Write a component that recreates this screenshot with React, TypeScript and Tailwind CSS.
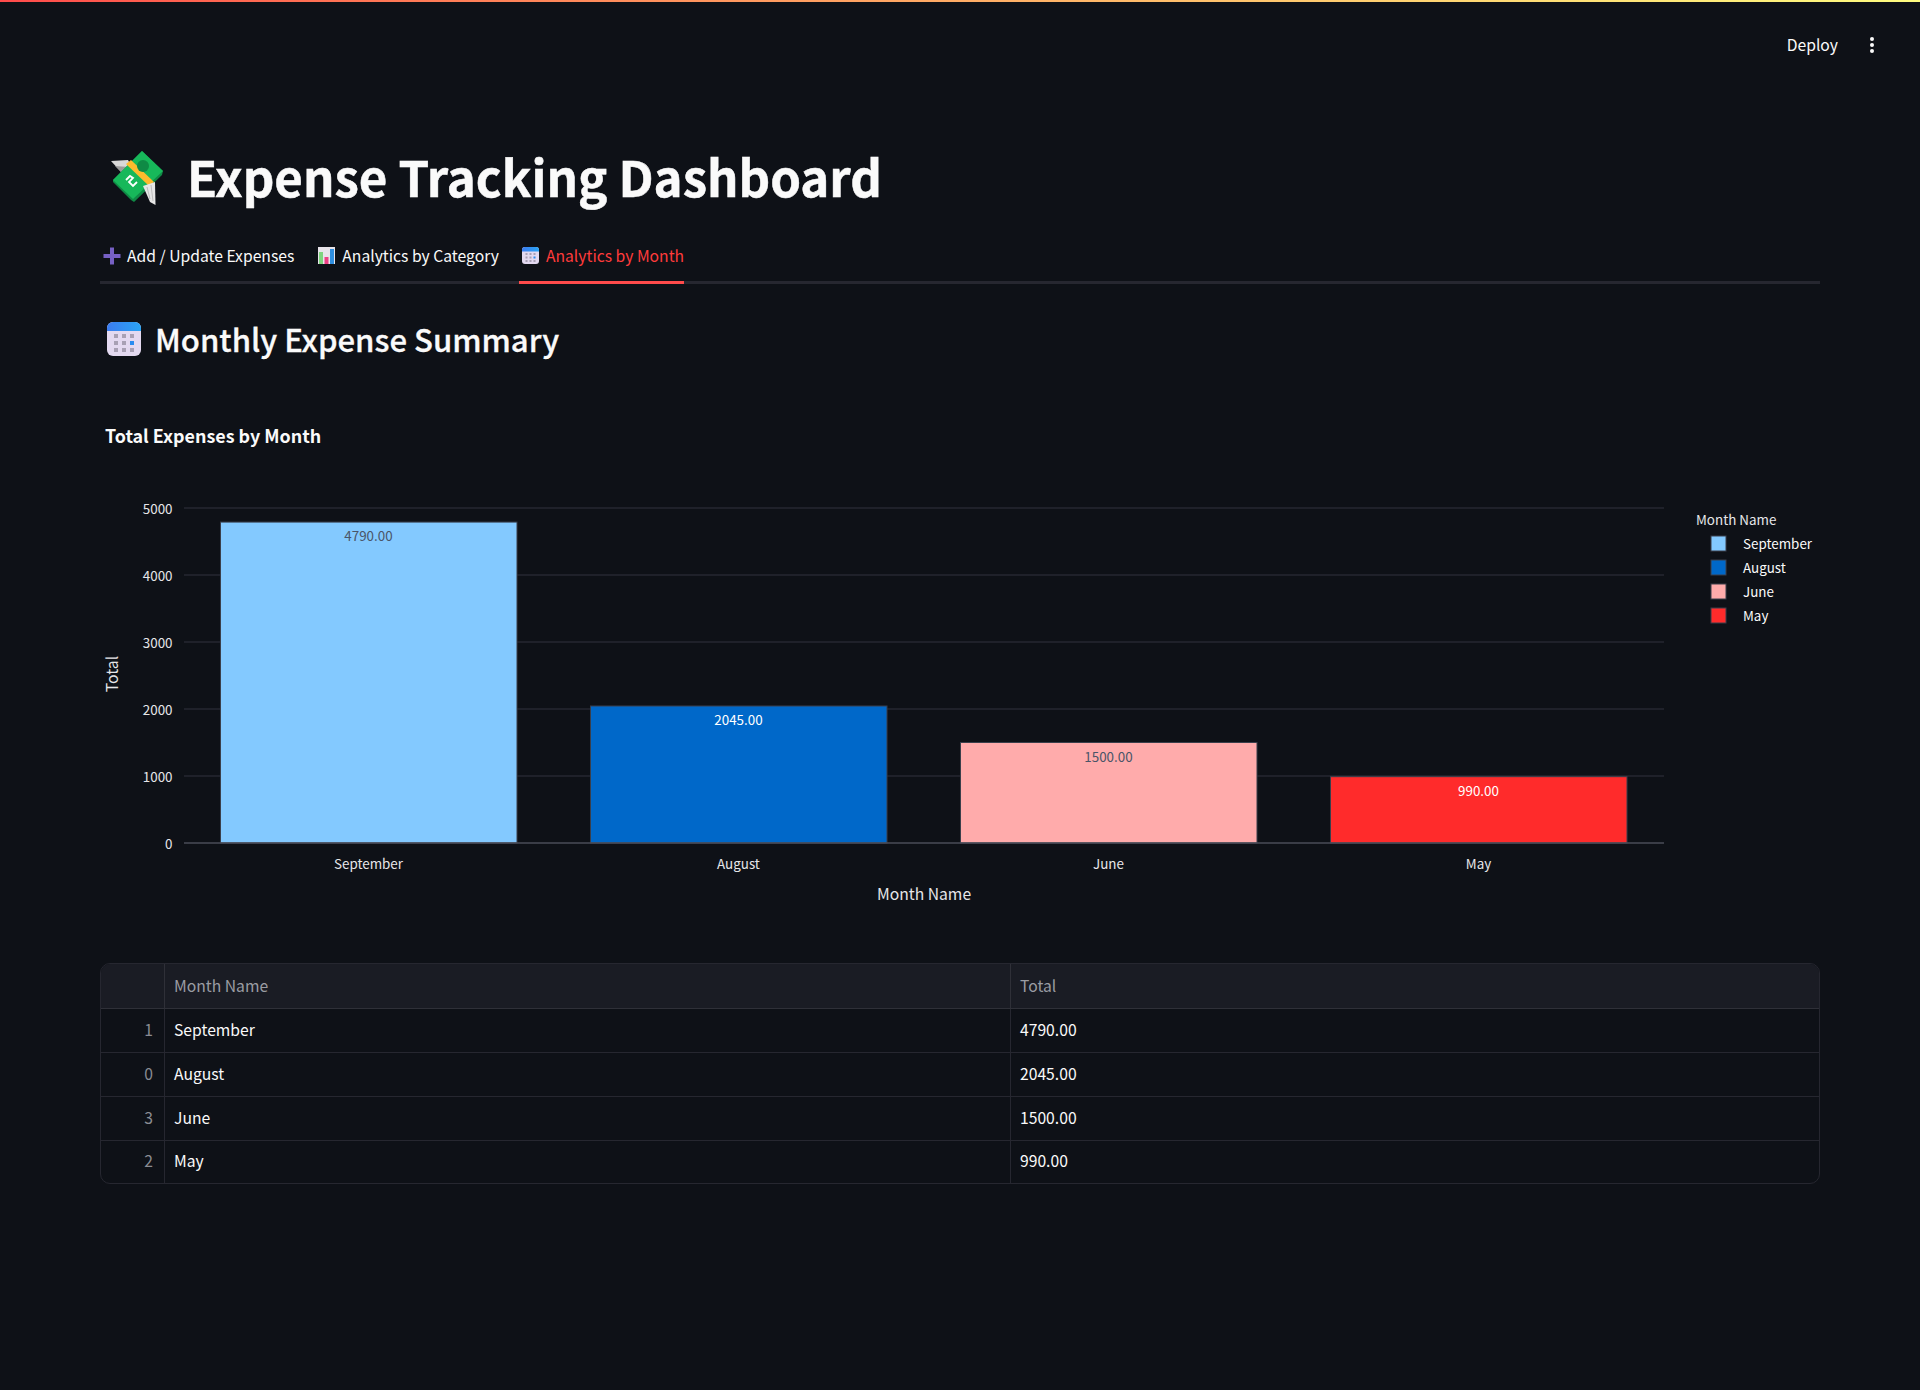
const FONT = "font-['Noto_Sans_CJK_SC','Noto_Sans',sans-serif]";

const bars = [
  { label: "September", value: 4790, x: 220.5, fill: "#83c9ff", text: "#4a5568" },
  { label: "August", value: 2045, x: 590.5, fill: "#0068c9", text: "#ffffff" },
  { label: "June", value: 1500, x: 960.5, fill: "#ffabab", text: "#4a5568" },
  { label: "May", value: 990, x: 1330.5, fill: "#ff2b2b", text: "#ffffff" },
];

const rows = [
  { id: 1, month: "September", total: "4790.00" },
  { id: 0, month: "August", total: "2045.00" },
  { id: 3, month: "June", total: "1500.00" },
  { id: 2, month: "May", total: "990.00" },
];

function MoneyIcon() {
  return (
    <svg width="80" height="70" viewBox="0 0 80 70" className="shrink-0">
      <path d="M11 21 L28 20 L34 31 L22 33 Z" fill="#d8d8d8" />
      <path d="M15 26 L29 27 L33 33 L22 33 Z" fill="#9b9b9b" />
      <path d="M42 11 L63 31 L62 35 L34 62 L31 60 L13 42 L13 40 Z" fill="#0f8a45" />
      <path d="M42 11 L63 31 L33 59 L13 40 Z" fill="#17b85a" />
      <path d="M26 24 L31 20 L54 42 L49 46 Z" fill="#fdbb2d" />
      <circle cx="43" cy="26" r="6" fill="#0f8a45" />
      <path d="M26 40 L30 36 L33 38 L29 42 L33 46 L37 42" fill="none" stroke="#ffffff" strokeWidth="1.8" />
      <path d="M43 46 L55 42 L55.5 65 L50 62 Z" fill="#e6e6e6" />
      <path d="M47 47 L50 59 M51 45 L53 61" stroke="#bdbdbd" strokeWidth="1" />
    </svg>
  );
}

function CalendarIcon({ size, id }: { size: number; id: string }) {
  return (
    <svg width={size} height={size} viewBox="0 0 34 34" className="shrink-0">
      <defs>
        <linearGradient id={id} x1="0" y1="0" x2="1" y2="0">
          <stop offset="0" stopColor="#3b7cf0" />
          <stop offset="1" stopColor="#2aa4f4" />
        </linearGradient>
      </defs>
      <rect x="0" y="0" width="34" height="34" rx="6" fill="#e3d9f0" />
      <path d="M0 9 V6 A6 6 0 0 1 6 0 H28 A6 6 0 0 1 34 6 V9 Z" fill={`url(#${id})`} />
      {[12, 19, 26].map((y) =>
        [7, 15, 23].map((x) => (
          <rect
            key={`${x}-${y}`}
            x={x}
            y={y}
            width="4"
            height="4"
            fill={x === 23 && y === 19 ? "#2a8cf0" : "#a8a0b4"}
          />
        )),
      )}
    </svg>
  );
}

function ChartIcon() {
  return (
    <svg width="17" height="17" viewBox="0 0 17 17" className="shrink-0">
      <rect width="17" height="17" fill="#e8e4ea" />
      <rect x="1" y="5" width="4" height="12" fill="#7ed47e" />
      <rect x="6.5" y="10" width="4" height="7" fill="#ee3f84" />
      <rect x="12" y="2" width="4" height="15" fill="#2f8fe0" />
    </svg>
  );
}

function PlusIcon() {
  return (
    <svg width="18" height="18" viewBox="0 0 18 18" className="shrink-0">
      <path d="M7 0.5 H11 V7 H17.5 V11 H11 V17.5 H7 V11 H0.5 V7 H7 Z" fill="#7660c4" />
    </svg>
  );
}

function Chart() {
  const base = 843;
  const scale = 67 / 1000;
  return (
    <svg width="1720" height="440" viewBox="100 480 1720 440" className="block" fontFamily="'Noto Sans CJK SC','Noto Sans',sans-serif">
      {[1000, 2000, 3000, 4000, 5000].map((t) => (
        <line key={t} x1="184" x2="1664" y1={base - t * scale} y2={base - t * scale} stroke="#31333f" strokeWidth="1" />
      ))}
      {[0, 1000, 2000, 3000, 4000, 5000].map((t) => (
        <text key={t} x="172.5" y={base - t * scale + 5.5} textAnchor="end" fontSize="13.4" fill="#e6e6e9">
          {t}
        </text>
      ))}
      {bars.map((b) => {
        const h = b.value * scale;
        return (
          <g key={b.label}>
            <rect x={b.x} y={base - h} width="296.5" height={h} fill={b.fill} stroke="#3a3f4b" strokeWidth="1" />
            <text x={b.x + 148} y={base - h + 19} textAnchor="middle" fontSize="13.4" fill={b.text}>
              {b.value}.00
            </text>
            <text x={b.x + 148} y="869" textAnchor="middle" fontSize="13.4" fill="#e6e6e9">
              {b.label}
            </text>
          </g>
        );
      })}
      <line x1="184" x2="1664" y1={base} y2={base} stroke="#4a4d59" strokeWidth="1.5" />
      <text x="924" y="899.5" textAnchor="middle" fontSize="15.7" fill="#e6e6e9">
        Month Name
      </text>
      <text transform="translate(118 674) rotate(-90)" textAnchor="middle" fontSize="15.7" fill="#e6e6e9">
        Total
      </text>
      <text x="1696" y="525" fontSize="13.4" fill="#e6e6e9">
        Month Name
      </text>
      {bars.map((b, i) => (
        <g key={b.label}>
          <rect x="1711" y={536 + i * 24} width="15" height="15" fill={b.fill} stroke="#3a3f4b" strokeWidth="1" />
          <text x="1743" y={549 + i * 24} fontSize="13.4" fill="#fafafa">
            {b.label}
          </text>
        </g>
      ))}
    </svg>
  );
}

export default function App() {
  return (
    <div className={`${FONT} min-h-screen bg-[#0e1117] text-[#fafafa]`}>
      <div className="h-[2px] bg-gradient-to-r from-[#ff4b4b] to-[#fffd80]" />
      <header className="flex h-[86px] items-center justify-end gap-[32px] pr-[46px] text-[15.7px]">
        <span>Deploy</span>
        <span className="flex flex-col gap-[2px]">
          <span className="h-[4px] w-[4px] rounded-full bg-[#fafafa]" />
          <span className="h-[4px] w-[4px] rounded-full bg-[#fafafa]" />
          <span className="h-[4px] w-[4px] rounded-full bg-[#fafafa]" />
        </span>
      </header>

      <main className="px-[100px] pt-[52px]">
        <h1 className="flex h-[70px] items-center gap-[7px] text-[49.2px] font-bold leading-none [-webkit-text-stroke:0.5px_#fafafa]">
          <MoneyIcon />
          <span className="pt-[2px]">Expense Tracking Dashboard</span>
        </h1>

        <div className="mt-[20px] flex h-[54px] gap-[20px] border-b-[3px] border-[#262730] text-[15.7px]">
          <div className="flex items-center gap-[6px] pl-[3px]">
            <PlusIcon />
            Add / Update Expenses
          </div>
          <div className="ml-[4px] flex items-center gap-[7px]">
            <ChartIcon />
            Analytics by Category
          </div>
          <div className="-mb-[3px] flex items-center gap-[7px] border-b-[3px] border-[#ff4b4b] pl-[3px] text-[#ff3b3b]">
            <CalendarIcon size={17} id="calSmall" />
            Analytics by Month
          </div>
        </div>

        <h2 className="mt-[38px] flex h-[34px] items-center gap-[14px] pl-[7px] text-[31.1px] font-medium leading-none [-webkit-text-stroke:0.3px_#fafafa]">
          <CalendarIcon size={34} id="calLarge" />
          Monthly Expense Summary
        </h2>

        <h3 className="mt-[67px] h-[24px] pl-[5px] text-[17.9px] font-bold leading-[24px]">
          Total Expenses by Month
        </h3>

        <div className="mt-[33px]">
          <Chart />
        </div>

        <div className="mt-[43px] overflow-hidden rounded-[10px] border border-[#262730] text-[15.7px]">
          <div className="grid h-[45px] grid-cols-[64px_846px_1fr] border-b border-[#2f3038] bg-[#1a1c24] text-[#9a9ca3]">
            <div className="border-r border-[#2f3038]" />
            <div className="flex items-center border-r border-[#2f3038] pl-[9px]">Month Name</div>
            <div className="flex items-center pl-[9px]">Total</div>
          </div>
          {rows.map((r, i) => (
            <div
              key={r.id}
              className={`grid grid-cols-[64px_846px_1fr] ${i < rows.length - 1 ? "h-[44px] border-b border-[#262730]" : "h-[42px]"}`}
            >
              <div className="flex items-center justify-end border-r border-[#262730] pb-[2px] pr-[11px] text-[#8a8c93]">{r.id}</div>
              <div className="flex items-center border-r border-[#262730] pb-[2px] pl-[9px]">{r.month}</div>
              <div className="flex items-center pb-[2px] pl-[9px]">{r.total}</div>
            </div>
          ))}
        </div>
      </main>
    </div>
  );
}
